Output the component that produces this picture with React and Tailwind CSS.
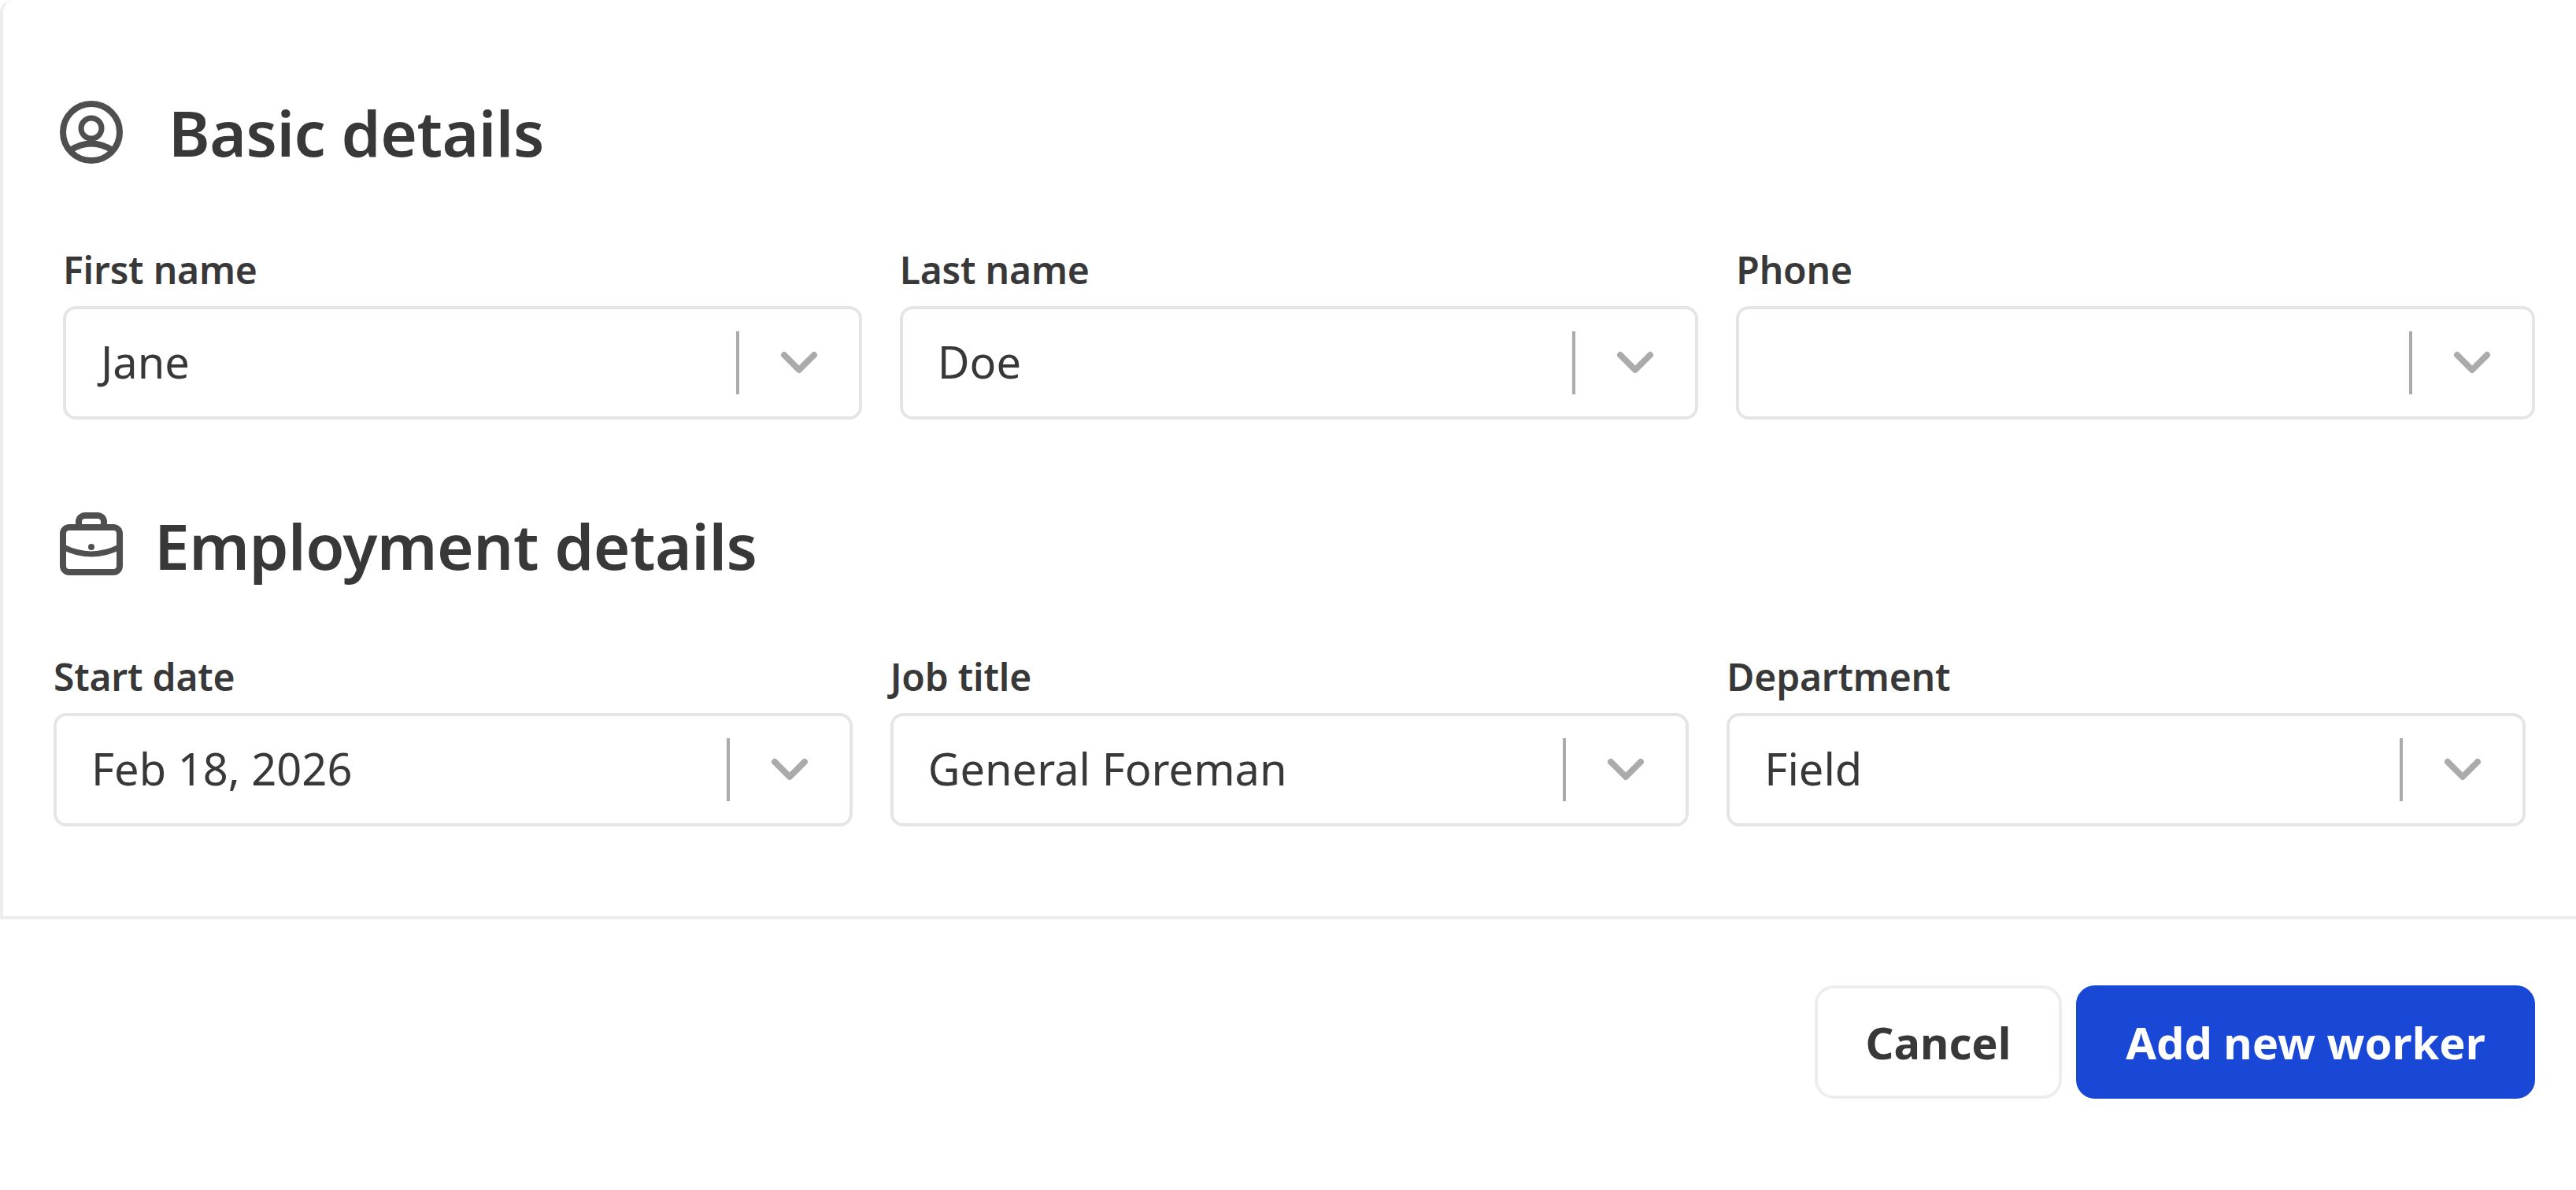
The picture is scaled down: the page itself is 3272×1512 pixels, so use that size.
const Field = ({ label, value }) => (
  <div className="flex flex-col">
    <label className="text-[48px] leading-[64px] font-semibold tracking-[-0.2px] text-[#383838] mb-[14px]">{label}</label>
    <div className="flex items-center h-[144px] rounded-2xl border-4 border-[#e5e5e5] bg-white">
      <span className="flex-1 pl-[44px] pb-[4px] text-[56px] leading-[76px] text-[#383838]">{value}</span>
      <span className="w-[4px] h-[80px] bg-[#ababab]" />
      <svg className="ml-[52px] mr-[52px] w-[48px] h-[30px]" viewBox="0 0 48 30" fill="none" stroke="#ababab" strokeWidth="8" strokeLinecap="round" strokeLinejoin="round">
        <path d="M5 5 L24 24 L43 5" />
      </svg>
    </div>
  </div>
);

const UserIcon = () => (
  <svg className="w-[80px] h-[80px] shrink-0" viewBox="0 0 80 80" fill="none" stroke="#4f4f4f" strokeWidth="8">
    <circle cx="40" cy="40" r="36" />
    <circle cx="40" cy="35" r="13" strokeWidth="7" />
    <path d="M13 63 Q40 46 67 63" />
  </svg>
);

const BriefcaseIcon = () => (
  <svg className="w-[80px] h-[80px] shrink-0" viewBox="0 0 80 80" fill="none" stroke="#4f4f4f" strokeWidth="8">
    <rect x="4" y="19" width="72" height="57" rx="8" />
    <path d="M24 17 V12 a8 8 0 0 1 8 -8 H48 a8 8 0 0 1 8 8 V17" />
    <path d="M4 44 Q40 62 76 44" strokeWidth="7" />
    <circle cx="40" cy="44" r="4" fill="#4f4f4f" stroke="none" />
  </svg>
);

export default function App() {
  return (
    <div className="w-[3272px] h-[1512px] bg-white overflow-hidden font-['Noto_Sans',sans-serif]">
      <div className="h-[1168px] border-l-4 border-b-4 border-[#ededed] rounded-tl-2xl pr-[52px]">
        {/* Basic details */}
        <div className="pl-[76px] pt-[128px]">
          <div className="flex items-center h-[80px] -ml-[4px]">
            <UserIcon />
            <h2 className="ml-[58px] text-[80px] leading-[80px] font-semibold tracking-[-0.5px] text-[#383838]">Basic details</h2>
          </div>
          <div className="grid grid-cols-3 gap-x-[48px] mt-[103px]">
            <Field label="First name" value="Jane" />
            <Field label="Last name" value="Doe" />
            <Field label="Phone" value="" />
          </div>
        </div>
        {/* Employment details */}
        <div className="pl-[64px] pr-[12px] pt-[118px]">
          <div className="flex items-center h-[80px] ml-[8px]">
            <BriefcaseIcon />
            <h2 className="ml-[40px] pt-[4px] text-[80px] leading-[80px] font-semibold tracking-[-0.5px] text-[#383838]">Employment details</h2>
          </div>
          <div className="grid grid-cols-3 gap-x-[48px] mt-[97px]">
            <Field label="Start date" value="Feb 18, 2026" />
            <Field label="Job title" value="General Foreman" />
            <Field label="Department" value="Field" />
          </div>
        </div>
      </div>
      <div className="flex justify-end gap-[18px] pt-[84px] pr-[52px]">
        <button className="w-[314px] h-[144px] rounded-[24px] border-4 border-[#ededed] bg-white text-[56px] font-bold text-[#383838]">Cancel</button>
        <button className="w-[583px] h-[144px] rounded-[24px] bg-[#1947d6] text-[56px] font-bold text-white">Add new worker</button>
      </div>
    </div>
  );
}
